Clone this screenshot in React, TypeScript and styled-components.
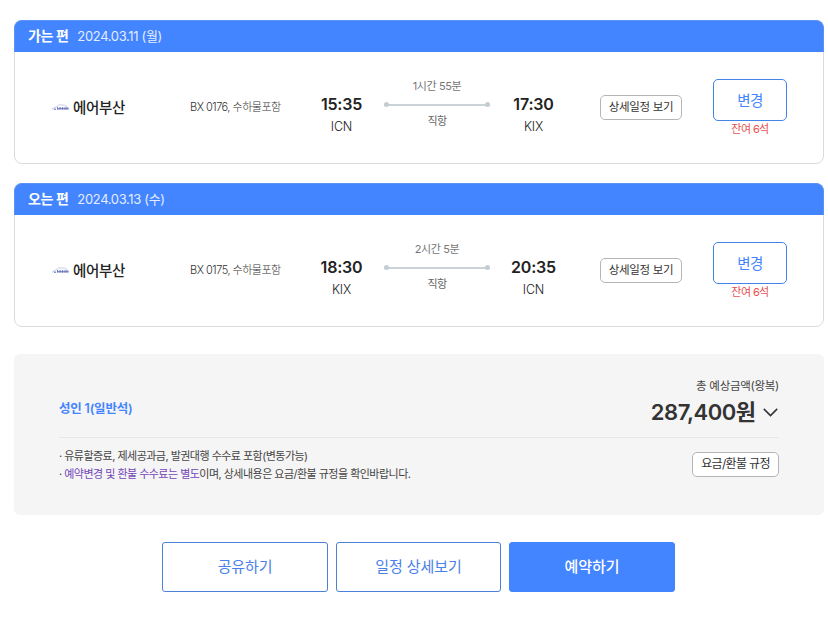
import React from "react";
import styled, { createGlobalStyle } from "styled-components";

const GlobalStyle = createGlobalStyle`
  *, *::before, *::after { box-sizing: border-box; }
  body {
    margin: 0;
    background: #fff;
    color: #222;
    font-family: Inter, "Noto Sans CJK KR", sans-serif;
  }
  button { font-family: inherit; padding: 0; cursor: pointer; }
`;

const Page = styled.main`
  width: 828px;
  height: 617px;
  padding: 20px 4px 0 14px;
  overflow: hidden;
`;

/* One line of text: fixed line box, no wrapping. */
const Text = styled.span<{ $size: number; $line: number; $track?: number; $weight?: number; $color?: string }>`
  display: block;
  white-space: nowrap;
  font-size: ${(p) => p.$size}px;
  line-height: ${(p) => p.$line}px;
  letter-spacing: ${(p) => p.$track ?? 0}px;
  font-weight: ${(p) => p.$weight ?? 400};
  color: ${(p) => p.$color ?? "#222"};
`;

const Card = styled.section`
  height: 144px;
  margin-bottom: 19px;
  border: 1px solid #d9dbde;
  border-radius: 8px;
`;

const CardHeader = styled.header`
  display: flex;
  align-items: center;
  gap: 9px;
  height: 32px;
  margin: -1px -1px 0;
  padding: 0 14px 2px;
  border: 1px solid #5a92f5;
  border-bottom: 0;
  border-radius: 8px 8px 0 0;
  background: #4384ff;
  padding-left: 13px;
`;

const CardBody = styled.div`
  display: grid;
  grid-template-columns: 138px 116px 71px 120px 73px 143px 74px;
  height: 111px;
  padding-left: 37px;
`;

const Airline = styled.div`
  display: flex;
  gap: 4px;
  padding-top: 46px;
`;

const AirlineMark = styled.svg`
  width: 17px;
  height: 8px;
  margin-top: 5px;
`;

const FlightInfo = styled.div`
  padding-top: 45px;
`;

const Stop = styled.div`
  display: flex;
  flex-direction: column;
  align-items: center;
  gap: 1px;
  padding-top: 42px;
`;

const Route = styled.div`
  display: flex;
  flex-direction: column;
  align-items: center;
  padding-top: 26px;
`;

const RouteLine = styled.div`
  display: flex;
  align-items: center;
  justify-content: space-between;
  width: 106px;
  height: 5px;
  margin: 8px 1px 6px 0;
  background: linear-gradient(#cbd3d8, #cbd3d8) center / 100% 2px no-repeat;

  &::before, &::after {
    content: "";
    width: 5px;
    height: 5px;
    border-radius: 50%;
    background: #c3cdd4;
  }
`;

const DetailCell = styled.div`
  padding: 43px 0 0 30px;
`;

const PillButton = styled.button<{ $width: number }>`
  display: flex;
  justify-content: center;
  align-items: center;
  width: ${(p) => p.$width}px;
  height: 25px;
  padding-bottom: 2px;
  border: 1px solid #b5b5b5;
  border-radius: 5px;
  background: #fff;
`;

const ChangeCell = styled.div`
  display: flex;
  flex-direction: column;
  align-items: center;
  padding-top: 27px;
`;

const ChangeButton = styled.button`
  display: flex;
  justify-content: center;
  align-items: center;
  width: 74px;
  height: 42px;
  padding-top: 2px;
  border: 1px solid #4384e8;
  border-radius: 5px;
  background: #fff;
`;

const Summary = styled.section`
  height: 161px;
  margin-top: 27px;
  padding: 22px 45px 0;
  border-radius: 6px;
  background: #f5f5f5;
`;

const SummaryTop = styled.div`
  display: flex;
  justify-content: space-between;
  height: 62px;
  border-bottom: 1px solid #e8e8e8;
`;

const Passenger = styled.div`
  padding-top: 23px;
`;

const Total = styled.div`
  display: flex;
  flex-direction: column;
  align-items: flex-end;
  padding-top: 1px;
`;

const Price = styled.div`
  display: flex;
  align-items: center;
  gap: 7px;
  padding: 2px 1.5px 0 0;
`;

const SummaryBottom = styled.div`
  display: flex;
  justify-content: space-between;
  padding-top: 14px;
`;

const Notes = styled.div`
  margin-top: -5px;
`;

const Accent = styled.span`
  color: #7446b8;
`;

const Actions = styled.div`
  display: grid;
  grid-template-columns: 166px 165px 166px;
  gap: 8px;
  margin: 27px 0 0 148px;
`;

const ActionButton = styled.button<{ $primary?: boolean }>`
  display: flex;
  justify-content: center;
  align-items: center;
  height: 50px;
  border: 1px solid ${(p) => (p.$primary ? "#4384ff" : "#4a80d8")};
  border-radius: 3px;
  background: ${(p) => (p.$primary ? "#4384ff" : "#fff")};
`;

function AirlineLogo() {
  return (
    <AirlineMark viewBox="0 0 17 8" fill="none" aria-hidden="true">
      <path d="M0 6.3 3.6 4.1 5 3.5" stroke="#a9b4d0" strokeWidth="0.8" />
      <path d="M5 3.2 7 1.8 12.5 2.2 15.5 3.7" stroke="#aebadb" strokeWidth="0.7" />
      <path d="M2 6.3h2M5 5.6h11.8" stroke="#8894cf" strokeWidth="1.6" />
      <path d="M5.5 4.2v2.3M8 4.2v2.3M10.5 4.2v2.3M13 4.2v2.3M15 4.2v2.3" stroke="#6973b5" strokeWidth="1" />
    </AirlineMark>
  );
}

interface Flight {
  label: string;
  date: string;
  code: string;
  depart: string;
  from: string;
  duration: string;
  arrive: string;
  to: string;
}

const flights: Flight[] = [
  { label: "가는 편", date: "2024.03.11 (월)", code: "BX 0176, 수하물포함", depart: "15:35", from: "ICN", duration: "1시간 55분", arrive: "17:30", to: "KIX" },
  { label: "오는 편", date: "2024.03.13 (수)", code: "BX 0175, 수하물포함", depart: "18:30", from: "KIX", duration: "2시간 5분", arrive: "20:35", to: "ICN" },
];

function StopInfo({ time, airport }: { time: string; airport: string }) {
  return (
    <Stop>
      <Text $size={16} $line={20} $weight={600} $track={-0.2}>{time}</Text>
      <Text $size={12.5} $line={24} $track={-0.2} $weight={300} $color="#222">{airport}</Text>
    </Stop>
  );
}

function FlightCard({ flight }: { flight: Flight }) {
  return (
    <Card>
      <CardHeader>
        <Text $size={14} $line={30} $weight={700} $track={-0.4} $color="#fff">{flight.label}</Text>
        <Text $size={13} $line={30} $track={-0.35} $color="#e3edff">{flight.date}</Text>
      </CardHeader>
      <CardBody>
        <Airline>
          <AirlineLogo />
          <Text $size={14.5} $line={20} $weight={500} $track={-0.35}>에어부산</Text>
        </Airline>
        <FlightInfo>
          <Text $size={11} $line={20} $track={-0.5} $weight={300} $color="#333">{flight.code}</Text>
        </FlightInfo>
        <StopInfo time={flight.depart} airport={flight.from} />
        <Route>
          <Text $size={11} $line={16} $track={-0.4} $color="#777">{flight.duration}</Text>
          <RouteLine />
          <Text $size={11} $line={16} $track={-0.6} $color="#666">직항</Text>
        </Route>
        <StopInfo time={flight.arrive} airport={flight.to} />
        <DetailCell>
          <PillButton type="button" $width={82}>
            <Text $size={11.5} $line={18} $track={-0.33} $color="#333">상세일정 보기</Text>
          </PillButton>
        </DetailCell>
        <ChangeCell>
          <ChangeButton type="button">
            <Text $size={14.5} $line={20} $track={-0.5} $color="#4384ff">변경</Text>
          </ChangeButton>
          <Text $size={11} $line={16} $track={-0.6} $color="#e8504f">잔여 6석</Text>
        </ChangeCell>
      </CardBody>
    </Card>
  );
}

export default function App() {
  return (
    <>
      <GlobalStyle />
      <Page>
        {flights.map((flight) => (
          <FlightCard key={flight.label} flight={flight} />
        ))}
        <Summary>
          <SummaryTop>
            <Passenger>
              <Text $size={12.5} $line={20} $weight={600} $track={-0.2} $color="#4384ff">성인 1(일반석)</Text>
            </Passenger>
            <Total>
              <Text $size={11.5} $line={18} $track={-0.28} $color="#444">총 예상금액(왕복)</Text>
              <Price>
                <Text $size={22} $line={30} $weight={600} $track={-0.5} $color="#333">287,400원</Text>
                <svg width="15" height="9" viewBox="0 0 15 9" fill="none" stroke="#333" strokeWidth="1.5" aria-hidden="true">
                  <path d="M.8.9 7.5 7.6 14.2.9" />
                </svg>
              </Price>
            </Total>
          </SummaryTop>
          <SummaryBottom>
            <Notes>
              <Text $size={11} $line={18} $track={-0.52} $color="#444">· 유류할증료, 제세공과금, 발권대행 수수료 포함(변동가능)</Text>
              <Text $size={11} $line={18} $track={-0.52} $color="#444">
                · <Accent>예약변경 및 환불 수수료는 별도</Accent>이며, 상세내용은 요금/환불 규정을 확인바랍니다.
              </Text>
            </Notes>
            <PillButton type="button" $width={87}>
              <Text $size={12} $line={18} $track={-0.65} $color="#333">요금/환불 규정</Text>
            </PillButton>
          </SummaryBottom>
        </Summary>
        <Actions>
          <ActionButton type="button">
            <Text $size={15} $line={22} $track={-0.15} $color="#4a80e8">공유하기</Text>
          </ActionButton>
          <ActionButton type="button">
            <Text $size={15} $line={22} $track={-0.1} $color="#4a80e8">일정 상세보기</Text>
          </ActionButton>
          <ActionButton type="button" $primary>
            <Text $size={15} $line={22} $weight={500} $track={-0.1} $color="#fff">예약하기</Text>
          </ActionButton>
        </Actions>
      </Page>
    </>
  );
}
